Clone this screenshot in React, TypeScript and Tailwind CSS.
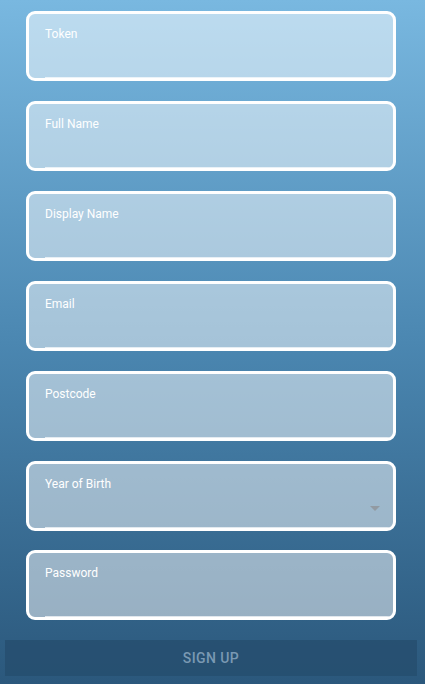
import React from "react";

const fields = ["Token", "Full Name", "Display Name", "Email", "Postcode", "Year of Birth", "Password"];

function Field({ label, select, className }: { label: string; select?: boolean; className?: string }) {
  return (
    <div className={"ml-[26px] w-[370px] h-[70px] rounded-[9px] border-[3px] border-white bg-white/50 flex flex-col overflow-hidden " + (className ?? "")}>
      <div className="flex-1 flex flex-col pl-[16px] pr-[13px] pt-[12px]">
        <span className="text-[12px] leading-[16px] text-white">{label}</span>
        {select && (
          <div className="flex justify-end mt-[14px]">
            <svg width="10" height="5" viewBox="0 0 10 5" className="block">
              <path d="M0 0 L10 0 L5 5 Z" fill="#929aa2" />
            </svg>
          </div>
        )}
      </div>
      <div className="ml-[16px] h-px bg-white/70" />
    </div>
  );
}

export default function App() {
  return (
    <div
      className="w-[425px] h-[684px] bg-gradient-to-b from-[#79b8e0] via-[#4b87b1] to-[#2b587c] pt-[11px] flex flex-col"
      style={{ fontFamily: "Roboto, 'Liberation Sans', sans-serif" }}
    >
      {fields.map((f, i) => (
        <Field
          key={f}
          label={f}
          select={f === "Year of Birth"}
          className={i === 0 ? "" : i === 6 ? "mt-[19px]" : "mt-[20px]"}
        />
      ))}
      <button className="mt-[20px] ml-[5px] w-[412px] h-[36px] bg-[#264e6e]/80 text-[#7a99b3] text-[14px] font-medium tracking-[0.4px] uppercase">
        Sign up
      </button>
    </div>
  );
}
